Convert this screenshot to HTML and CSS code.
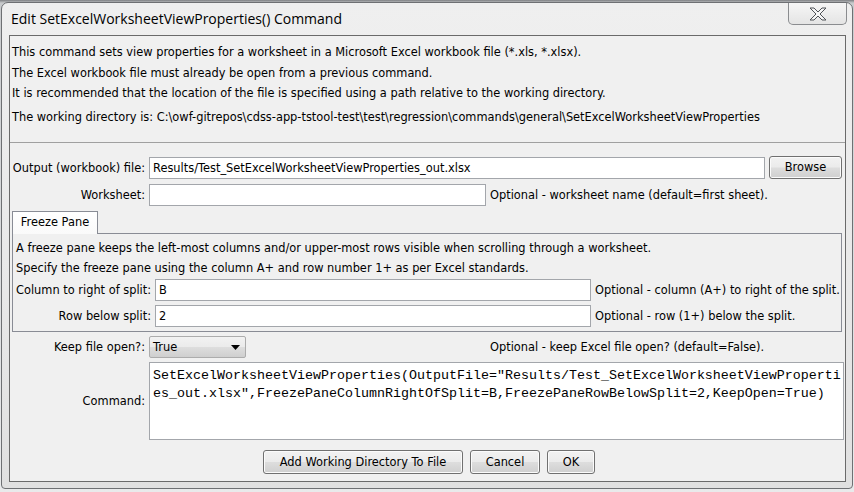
FILE: index.html
```html
<!DOCTYPE html>
<html>
<head>
<meta charset="utf-8">
<title>Edit SetExcelWorksheetViewProperties() Command</title>
<link rel="stylesheet" href="styles.css">
</head>
<body>
<div class="window">
  <div class="titlebar">
    <div class="title">Edit SetExcelWorksheetViewProperties() Command</div>
    <div class="close">
      <svg width="18" height="14" viewBox="0 0 18 14"><polygon points="1,1 5,1 9,5 13,1 17,1 11,7 17,13 13,13 9,9 5,13 1,13 7,7" fill="#f6f6f6" stroke="#4f5257" stroke-width="1" stroke-linejoin="round"/></svg>
    </div>
  </div>
  <div class="content">
    <div class="info">
      <div class="line">This command sets view properties for a worksheet in a Microsoft Excel workbook file (*.xls, *.xlsx).</div>
      <div class="line l2">The Excel workbook file must already be open from a previous command.</div>
      <div class="line">It is recommended that the location of the file is specified using a path relative to the working directory.</div>
      <div class="line l4">The working directory is: C:\owf-gitrepos\cdss-app-tstool-test\test\regression\commands\general\SetExcelWorksheetViewProperties</div>
    </div>
    <div class="sep"></div>
    <div class="row r-output">
      <div class="label">Output (workbook) file:</div>
      <div class="field f-output">Results/Test_SetExcelWorksheetViewProperties_out.xlsx</div>
      <div class="btn b-browse">Browse</div>
    </div>
    <div class="row r-sheet">
      <div class="label">Worksheet:</div>
      <div class="field f-sheet"></div>
      <div class="note">Optional - worksheet name (default=first sheet).</div>
    </div>
    <div class="tabs">
      <div class="tab">Freeze Pane</div>
      <div class="tab-fill"></div>
    </div>
    <div class="panel">
      <div class="line">A freeze pane keeps the left-most columns and/or upper-most rows visible when scrolling through a worksheet.</div>
      <div class="line">Specify the freeze pane using the column A+ and row number 1+ as per Excel standards.</div>
      <div class="row r-col">
        <div class="label">Column to right of split:</div>
        <div class="field f-panel">B</div>
        <div class="note">Optional - column (A+) to right of the split.</div>
      </div>
      <div class="row r-rowsplit">
        <div class="label">Row below split:</div>
        <div class="field f-panel">2</div>
        <div class="note">Optional - row (1+) below the split.</div>
      </div>
    </div>
    <div class="row r-keep">
      <div class="label">Keep file open?:</div>
      <div class="combo-cell">
        <div class="combo"><span>True</span><svg width="9" height="5" viewBox="0 0 9 5"><polygon points="0,0 9,0 4.5,5" fill="#000"/></svg></div>
      </div>
      <div class="note">Optional - keep Excel file open? (default=False).</div>
    </div>
    <div class="row r-command">
      <div class="label">Command:</div>
      <div class="textarea"><div class="code">SetExcelWorksheetViewProperties(OutputFile="Results/Test_SetExcelWorksheetViewProperties_out.xlsx",FreezePaneColumnRightOfSplit=B,FreezePaneRowBelowSplit=2,KeepOpen=True)</div></div>
    </div>
    <div class="buttons">
      <div class="btn b-add">Add Working Directory To File</div>
      <div class="btn b-cancel">Cancel</div>
      <div class="btn b-ok">OK</div>
    </div>
  </div>
</div>
</body>
</html>
```

FILE: styles.css
```css
* { box-sizing: border-box; }
html, body { margin: 0; padding: 0; }
body {
  width: 854px;
  height: 492px;
  overflow: hidden;
  background: linear-gradient(#7d7f82 0px, #c9cbcd 3px, #e9eaeb 100%);
  font-family: "DejaVu Sans", sans-serif;
  font-size: 11.4px;
  color: #000;
}
.window {
  margin: 2px 0 0 1px;
  width: 852px;
  height: 487px;
  border: 1px solid #6e7073;
  border-radius: 7px 7px 4px 4px;
  background: linear-gradient(#efefef, #e8e8e8 60%, #e0e0e0);
  padding: 0 6px 6px 7px;
}
.titlebar {
  height: 32px;
  display: flex;
  align-items: flex-start;
}
.title {
  font-family: "Open Sans", sans-serif;
  font-size: 14px;
  line-height: 22px;
  padding: 5px 0 0 2px;
  color: #000;
}
.close {
  margin-left: auto;
  margin-right: -1px;
  width: 59px;
  height: 22px;
  border: 1px solid #8a8c8f;
  border-top: none;
  border-radius: 0 0 5px 5px;
  background: linear-gradient(#f6f6f6, #e4e4e4);
  display: flex;
  align-items: center;
  justify-content: center;
}
.content {
  height: 447px;
  border: 1px solid #6a6a6a;
  background: #f0f0f0;
}
.info { padding: 6px 0 0 2px; }
.line {
  height: 20px;
  line-height: 20px;
  white-space: nowrap;
}
.l2 { margin-top: 1px; }
.l4 { margin-top: 4px; }
.sep {
  margin-top: 15px;
  height: 1px;
  background: #a0a0a0;
}
.row {
  display: flex;
  align-items: center;
  white-space: nowrap;
}
.label {
  flex: none;
  width: 135px;
  margin-right: 4px;
  text-align: right;
}
.field {
  flex: none;
  height: 22px;
  border: 1px solid #a3a6ab;
  background: #fff;
  padding-left: 3px;
  line-height: 20px;
}
.note { margin-left: 4px; }
.r-output { margin-top: 13px; height: 23px; }
.f-output { width: 616px; }
.btn {
  flex: none;
  border: 1px solid #707070;
  border-radius: 3px;
  background: linear-gradient(#f2f2f2 0%, #ebebeb 48%, #dddddd 52%, #cfcfcf 100%);
  box-shadow: inset 0 0 0 1px #fbfbfb;
  text-align: center;
}
.b-browse {
  margin-left: 4px;
  width: 73px;
  height: 23px;
  line-height: 21px;
}
.r-sheet { margin-top: 5px; height: 22px; }
.f-sheet { width: 337px; }
.tabs {
  margin: 5px 3px 0 2px;
  display: flex;
  height: 23px;
}
.tab {
  width: 86px;
  height: 23px;
  border: 1px solid #898c95;
  border-bottom: none;
  background: linear-gradient(#ffffff, #fafafa);
  text-align: center;
  line-height: 21px;
}
.tab-fill {
  flex: 1;
  border-bottom: 1px solid #898c95;
}
.panel {
  margin: 0 3px 0 2px;
  height: 98px;
  border: 1px solid #898c95;
  border-top: none;
  padding: 4px 0 0 3px;
}
.r-col { margin-top: 1px; height: 22px; }
.r-rowsplit { margin-top: 4px; height: 22px; }
.f-panel { width: 436px; }
.r-keep { margin-top: 4px; height: 22px; }
.combo-cell { flex: none; width: 337px; }
.combo {
  width: 97px;
  height: 22px;
  border: 1px solid #acacac;
  border-radius: 2px;
  background: linear-gradient(#f2f2f2 0%, #ebebeb 48%, #dddddd 52%, #cfcfcf 100%);
  display: flex;
  align-items: center;
  justify-content: space-between;
  padding: 0 5px 0 3px;
}
.r-command { margin-top: 4px; height: 78px; }
.textarea {
  flex: none;
  width: 695px;
  height: 78px;
  border: 1px solid #a3a6ab;
  background: #fff;
  padding: 4px 0 0 3px;
}
.code {
  width: 690px;
  font-family: "Liberation Mono", "Courier New", monospace;
  font-size: 13.333px;
  line-height: 18px;
  white-space: normal;
  word-break: break-all;
}
.buttons {
  margin-top: 10px;
  display: flex;
  justify-content: center;
  gap: 7px;
  padding-left: 3px;
}
.buttons .btn {
  height: 24px;
  line-height: 22px;
}
.b-add { width: 200px; }
.b-cancel { width: 70px; }
.b-ok { width: 48px; }
```
